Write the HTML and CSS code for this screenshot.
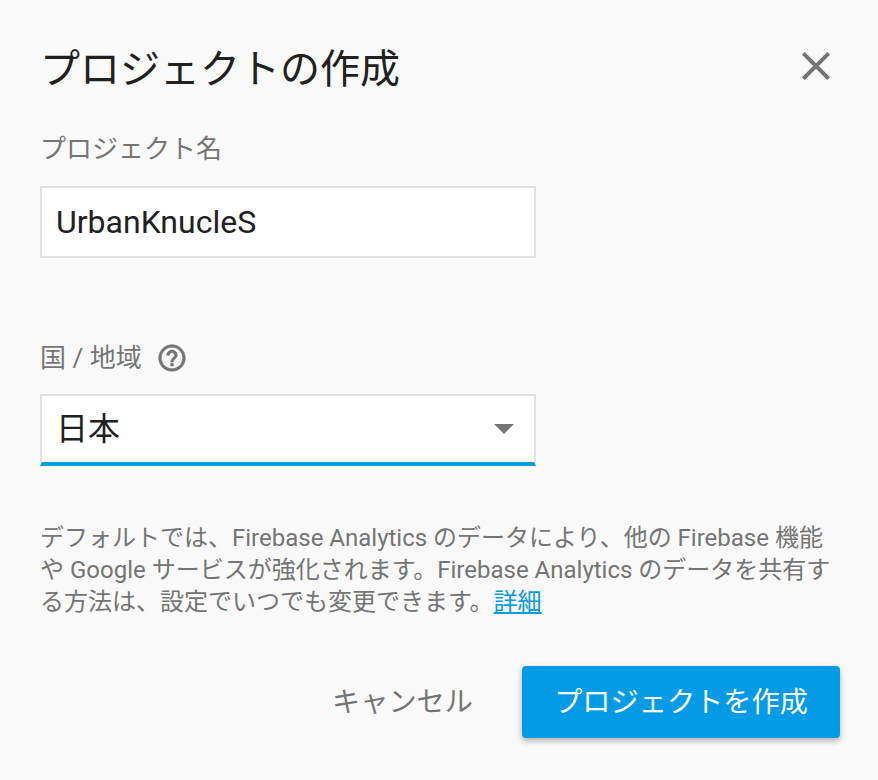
FILE: index.html
```html
<!DOCTYPE html>
<html lang="ja">
<head>
<meta charset="utf-8">
<title>プロジェクトの作成</title>
<link rel="stylesheet" href="styles.css">
</head>
<body>
<main class="dialog">
  <header class="head">
    <h1 class="title">プロジェクトの作成</h1>
    <svg class="close" width="48" height="48" viewBox="0 0 48 48" aria-label="閉じる"><path d="M38 12.8 35.2 10 24 21.2 12.8 10 10 12.8 21.2 24 10 35.2 12.8 38 24 26.8 35.2 38 38 35.2 26.8 24z"/></svg>
  </header>
  <label class="label name-label">プロジェクト名</label>
  <div class="field">UrbanKnucleS</div>
  <div class="label country-label">国 / 地域
    <svg class="help" width="32" height="32" viewBox="0 0 24 24"><path d="M11 18h2v-2h-2v2zm1-16C6.48 2 2 6.48 2 12s4.48 10 10 10 10-4.48 10-10S17.52 2 12 2zm0 18c-4.41 0-8-3.59-8-8s3.59-8 8-8 8 3.59 8 8-3.59 8-8 8zm0-14c-2.21 0-4 1.79-4 4h2c0-1.1.9-2 2-2s2 .9 2 2c0 2-3 1.75-3 5h2c0-2.25 3-2.5 3-5 0-2.21-1.79-4-4-4z"/></svg>
  </div>
  <div class="field select"><span>日本</span><i class="arrow"></i></div>
  <p class="note">デフォルトでは、Firebase Analytics のデータにより、他の Firebase 機能や Google サービスが強化されます。Firebase Analytics のデータを共有する方法は、設定でいつでも変更できます。<a href="#">詳細</a></p>
  <footer class="actions">
    <button class="btn cancel">キャンセル</button>
    <button class="btn primary">プロジェクトを作成</button>
  </footer>
</main>
</body>
</html>
```
FILE: styles.css
```css
html, body { margin: 0; padding: 0; }
body {
  width: 878px;
  height: 780px;
  overflow: hidden;
  background: #fafafa;
  font-family: Roboto, "Noto Sans CJK JP", sans-serif;
}
.dialog { padding: 42px 38px 0 40px; display: flex; flex-direction: column; }
.head { display: flex; align-items: center; justify-content: space-between; height: 56px; }
.title { margin: 0; font-size: 40px; font-weight: 400; line-height: 56px; color: #212121; }
.close { fill: #757575; margin-bottom: 8px; }
.label { font-size: 26px; line-height: 36px; color: #757575; display: flex; align-items: center; }
.name-label { margin-top: 33px; display: block; }
.country-label { margin-top: 82px; height: 36px; }
.help { fill: #757575; stroke: #757575; stroke-width: .4; margin-left: 14px; }
.field {
  box-sizing: border-box;
  width: 496px;
  height: 72px;
  margin-top: 19px;
  padding: 0 14px;
  background: #fff;
  border: 2px solid #e0e0e0;
  font-size: 32px;
  line-height: 68px;
  color: #212121;
}
.select { display: flex; align-items: center; justify-content: space-between; margin-top: 18px; padding: 0 20px 0 14px; border-bottom: 4px solid #039be5; }
.arrow { width: 0; height: 0; border-left: 10px solid transparent; border-right: 10px solid transparent; border-top: 10px solid #757575; }
.note { margin: 56px 0 0; width: 796px; font-size: 24px; line-height: 32.2px; color: #757575; }
.note a { color: #039be5; }
.actions { display: flex; justify-content: flex-end; align-items: center; margin-top: 47px; }
.btn { border: 0; background: none; font-family: inherit; font-size: 28.2px; height: 72px; padding: 0 0 4px; }
.cancel { color: #757575; margin-right: 49px; }
.primary { width: 318px; background: #039be5; color: #fff; border-radius: 4px; box-shadow: 0 3px 6px rgba(0,0,0,.3); }
```
